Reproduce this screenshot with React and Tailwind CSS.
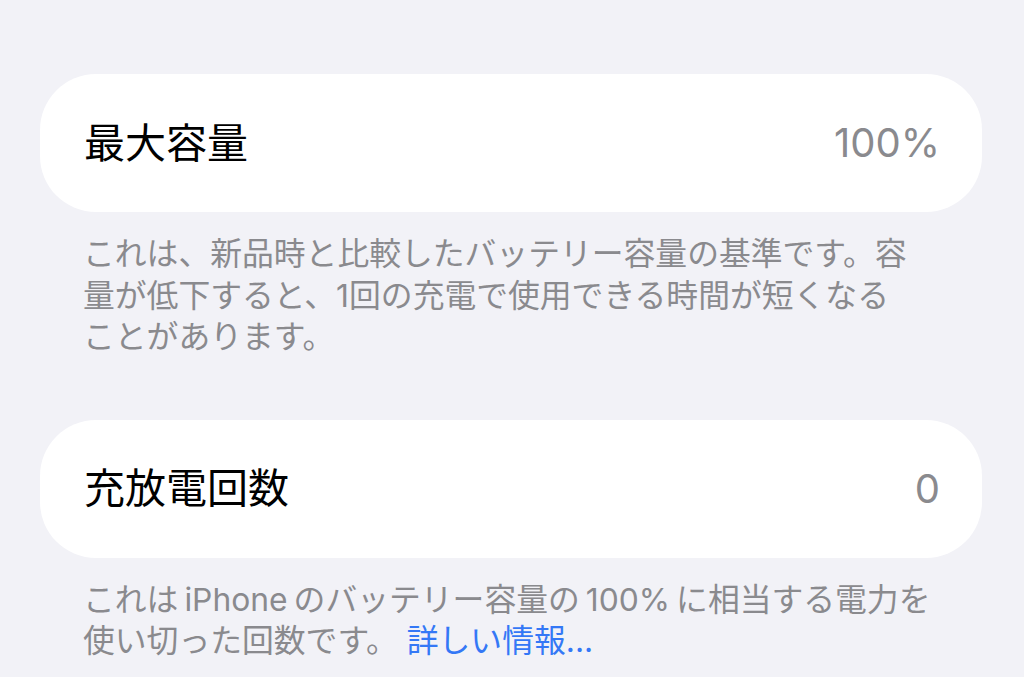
const font = { fontFamily: '"Inter", "Noto Sans CJK JP", sans-serif' };

function Row({ label, value }) {
  return (
    <div className="flex h-[138px] items-center justify-between rounded-[56px] bg-white pl-[44px] pr-[42px]">
      <span className="text-[41px] leading-none text-black">{label}</span>
      <span className="text-[40px] leading-none text-[#8a8a8e]">{value}</span>
    </div>
  );
}

function Footnote({ children }) {
  return (
    <p className="w-[896px] pl-[43px] pt-[21px] text-[31.8px] leading-[41.5px] text-[#8a8a8e]">
      {children}
    </p>
  );
}

export default function App() {
  return (
    <div
      className="h-[677px] w-[1024px] overflow-hidden bg-[#f2f2f7] pl-[40px] pr-[42px] pt-[74px]"
      style={font}
    >
      <Row label="最大容量" value="100%" />
      <Footnote>
        これは、新品時と比較したバッテリー容量の基準です。容量が低下すると、1回の充電で使用できる時間が短くなる
        <br />
        ことがあります。
      </Footnote>

      <div className="mt-[62px]">
        <Row label="充放電回数" value="0" />
      </div>
      <Footnote>
        これは<span className="mx-[6px]">iPhone</span>のバッテリー容量の<span className="mx-[6px]">100%</span>に相当する電力を使い切った回数です。{' '}
        <span className="text-[#3478f6]">詳しい情報...</span>
      </Footnote>
    </div>
  );
}
